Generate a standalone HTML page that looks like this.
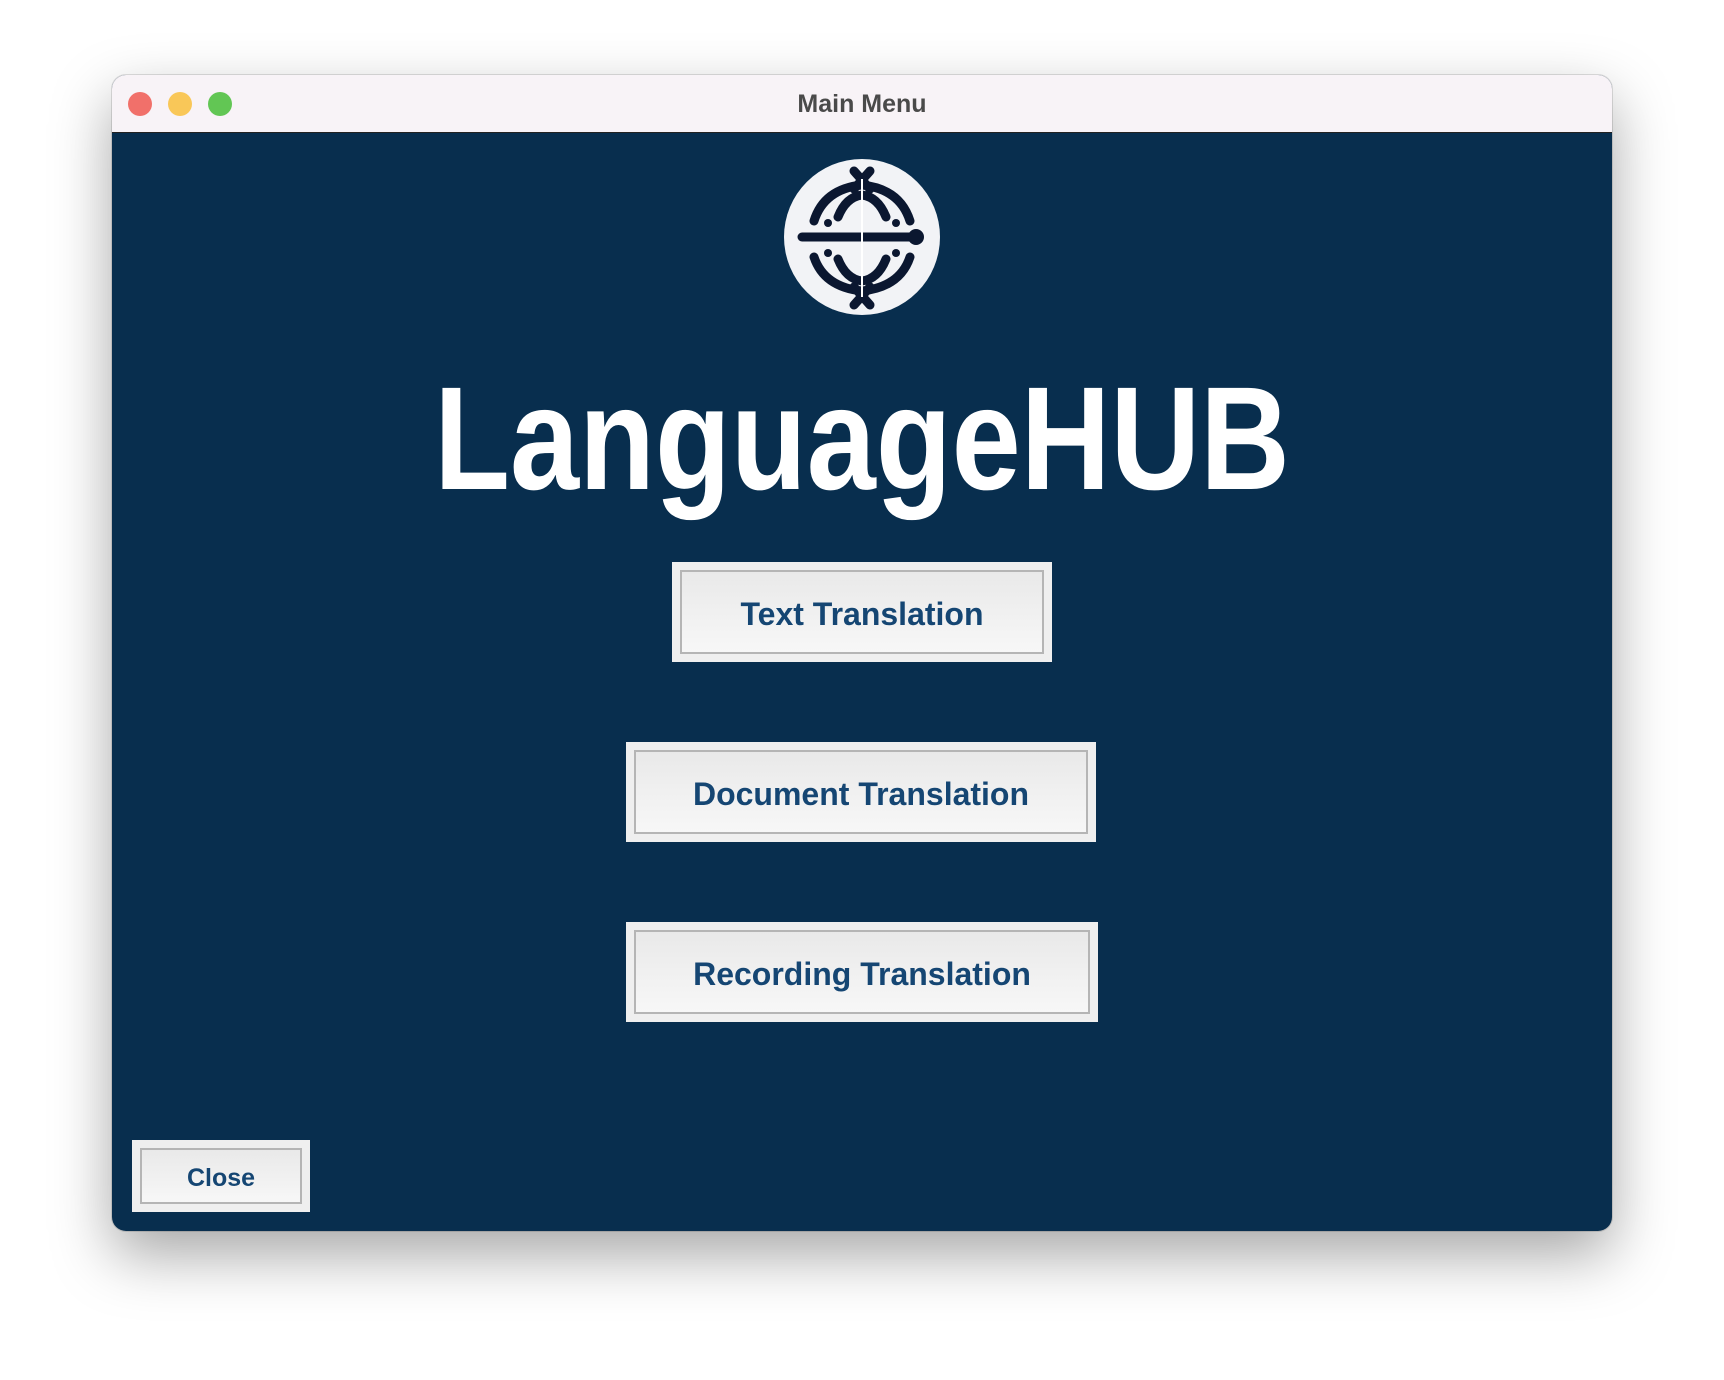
<!DOCTYPE html>
<html><head><meta charset="utf-8"><style>
html,body{margin:0;padding:0;width:1724px;height:1380px;background:#fff;overflow:hidden;font-family:"Liberation Sans",sans-serif}
.win{position:absolute;left:112px;top:75px;width:1500px;height:1156px;border-radius:14px;overflow:hidden;background:#082e4e;box-shadow:0 24px 60px rgba(0,0,0,.35),0 0 0 1px rgba(0,0,0,.12)}
.tb{position:absolute;left:0;top:0;width:100%;height:57px;background:#f8f3f7;border-bottom:1px solid #222}
.tb .t{position:absolute;left:0;right:0;top:15px;text-align:center;font-size:25px;font-weight:bold;color:#4a4a4a}
.dot{position:absolute;top:17px;width:24px;height:24px;border-radius:50%}
.btn{position:absolute;background:#efefef;box-sizing:border-box}
.btn .in{position:absolute;left:8px;top:8px;right:8px;bottom:8px;border:2px solid #b5b5b5;background:linear-gradient(#e9e9e9,#f7f7f7);display:flex;align-items:center;justify-content:center;font-weight:bold;font-size:32px;color:#154673;padding-top:5px;box-sizing:border-box}
.title{position:absolute;left:0;width:1500px;top:290px;text-align:center;color:#fff;font-size:147px;line-height:148px;font-weight:bold;transform:scaleX(.845);transform-origin:750px 0}
</style></head><body>
<div class="win">
<div class="tb"><div class="dot" style="left:16px;background:#f1706a"></div><div class="dot" style="left:56px;background:#f9c758"></div><div class="dot" style="left:96px;background:#62c654"></div><div class="t">Main Menu</div></div>
<svg style="position:absolute;left:672px;top:84px" width="156" height="156" viewBox="0 0 156 156">
<circle cx="78" cy="78" r="78" fill="#f2f3f6"/>
<g fill="none" stroke="#0b1730" stroke-width="9" stroke-linecap="round">
<path d="M30 62 Q40 30 78 26 Q116 30 126 62"/><path d="M30 98 Q40 128 78 132 Q116 128 126 98"/>
<path d="M54 58 Q62 38 78 36 Q94 38 102 58"/><path d="M54 100 Q62 120 78 122 Q94 120 102 100"/>
<path d="M70 12 L86 30 M86 12 L70 30 M70 146 L86 128 M86 146 L70 128"/>
<path d="M18 78 L130 78"/></g>
<circle cx="132" cy="78" r="8" fill="#0b1730"/>
<circle cx="44" cy="64" r="4" fill="#0b1730"/><circle cx="112" cy="64" r="4" fill="#0b1730"/>
<circle cx="44" cy="94" r="4" fill="#0b1730"/><circle cx="112" cy="94" r="4" fill="#0b1730"/>
<path d="M78 20 L78 138" stroke="#fff" stroke-width="2"/>
</svg>
<div class="title">LanguageHUB</div>
<div class="btn" style="left:560px;top:487px;width:380px;height:100px"><div class="in">Text Translation</div></div>
<div class="btn" style="left:514px;top:667px;width:470px;height:100px"><div class="in">Document Translation</div></div>
<div class="btn" style="left:514px;top:847px;width:472px;height:100px"><div class="in">Recording Translation</div></div>
<div class="btn" style="left:20px;top:1065px;width:178px;height:72px"><div class="in" style="font-size:25px">Close</div></div>
</div>
</body></html>
